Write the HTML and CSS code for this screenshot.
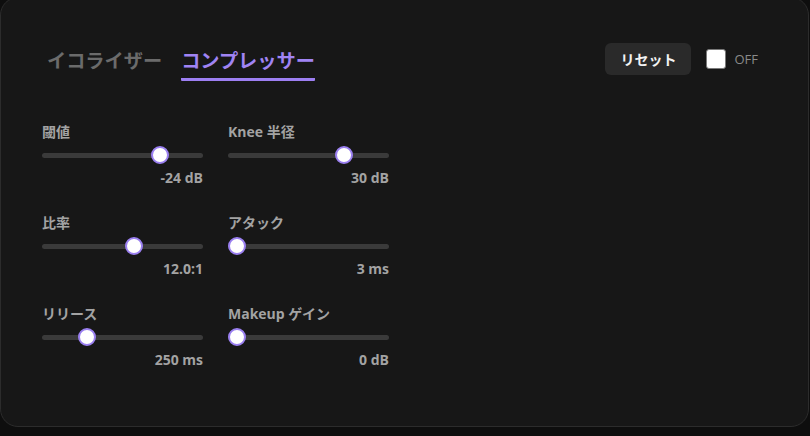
FILE: index.html
```html
<!DOCTYPE html>
<html lang="ja">
<head>
<meta charset="utf-8">
<title>コンプレッサー</title>
<link rel="stylesheet" href="styles.css">
</head>
<body>
<div class="panel">
  <header class="header">
    <nav class="tabs">
      <button class="tab">イコライザー</button>
      <button class="tab active">コンプレッサー</button>
    </nav>
    <div class="controls">
      <button class="reset">リセット</button>
      <label class="toggle"><input type="checkbox" class="check"><span>OFF</span></label>
    </div>
  </header>
  <section class="grid">
    <div class="field">
      <span class="label">閾値</span>
      <input type="range" class="slider" min="-100" max="0" value="-24">
      <span class="value">-24 dB</span>
    </div>
    <div class="field">
      <span class="label">Knee 半径</span>
      <input type="range" class="slider" min="0" max="40" value="30">
      <span class="value">30 dB</span>
    </div>
    <div class="field">
      <span class="label">比率</span>
      <input type="range" class="slider" min="1" max="20" step="0.1" value="12">
      <span class="value">12.0:1</span>
    </div>
    <div class="field">
      <span class="label">アタック</span>
      <input type="range" class="slider" min="0" max="1000" value="3">
      <span class="value">3 ms</span>
    </div>
    <div class="field">
      <span class="label">リリース</span>
      <input type="range" class="slider" min="0" max="1000" value="250">
      <span class="value">250 ms</span>
    </div>
    <div class="field">
      <span class="label">Makeup ゲイン</span>
      <input type="range" class="slider" min="0" max="24" value="0">
      <span class="value">0 dB</span>
    </div>
  </section>
</div>
</body>
</html>
```
FILE: styles.css
```css
* { box-sizing: border-box; }
html, body { margin: 0; padding: 0; }
body {
  background: #0e0e0e;
  font-family: "Segoe UI", "Noto Sans CJK JP", "Noto Sans", sans-serif;
  width: 810px;
  height: 436px;
  overflow: hidden;
}
.panel {
  margin-top: -3px;
  width: 809px;
  height: 430px;
  background: #171717;
  border: 1px solid #2c2c2c;
  border-radius: 18px;
  padding: 44px 50px 0 41px;
}
.header {
  display: flex;
  justify-content: space-between;
  align-items: flex-start;
}
.tabs {
  display: flex;
  gap: 19px;
  margin-left: 5px;
  margin-top: 6px;
}
.tab {
  background: none;
  border: none;
  padding: 0 0 6px;
  margin: 0;
  font-family: "Noto Sans CJK JP", sans-serif;
  font-size: 19.2px;
  line-height: 24px;
  font-weight: 700;
  color: #6b6b6b;
  border-bottom: 3px solid transparent;
  cursor: pointer;
}
.tab.active {
  color: #a084f4;
  border-bottom-color: #9d7ff2;
  border-radius: 1px;
}
.controls {
  display: flex;
  align-items: center;
  gap: 15px;
  margin-top: 1px;
}
.reset {
  height: 32px;
  width: 86px;
  border: none;
  border-radius: 6px;
  background: #2a2a2a;
  color: #f2f2f2;
  font-family: "Noto Sans CJK JP", sans-serif;
  font-size: 14px;
  font-weight: 700;
  padding: 0;
}
.toggle {
  display: flex;
  align-items: center;
  gap: 8px;
  color: #8a8a8a;
  font-size: 13px;
  font-family: "Open Sans", "Noto Sans", sans-serif;
}
.check {
  appearance: none;
  -webkit-appearance: none;
  width: 20px;
  height: 20px;
  margin: 0;
  background: #fff;
  border: 1px solid #7a7a7a;
  border-radius: 3px;
}
.grid {
  display: grid;
  grid-template-columns: 161px 161px;
  column-gap: 25px;
  row-gap: 26px;
  margin-top: 41px;
}
.field {
  display: flex;
  flex-direction: column;
}
.label {
  font-family: "Open Sans", "Noto Sans CJK JP", sans-serif;
  font-size: 14px;
  line-height: 20px;
  font-weight: 700;
  color: #a3a3a3;
  margin-bottom: 4px;
}
.value {
  font-family: "Open Sans", "Noto Sans CJK JP", sans-serif;
  font-size: 14px;
  line-height: 18px;
  font-weight: 700;
  color: #a3a3a3;
  text-align: right;
  margin-top: 5px;
}
.slider {
  -webkit-appearance: none;
  appearance: none;
  width: 161px;
  height: 18px;
  margin: 0;
  background: transparent;
}
.slider::-webkit-slider-runnable-track {
  height: 5px;
  background: #3a3a3a;
  border-radius: 3px;
}
.slider::-webkit-slider-thumb {
  -webkit-appearance: none;
  width: 18px;
  height: 18px;
  margin-top: -6.5px;
  border-radius: 50%;
  background: #fff;
  border: 2px solid #9a7ff0;
}
```
